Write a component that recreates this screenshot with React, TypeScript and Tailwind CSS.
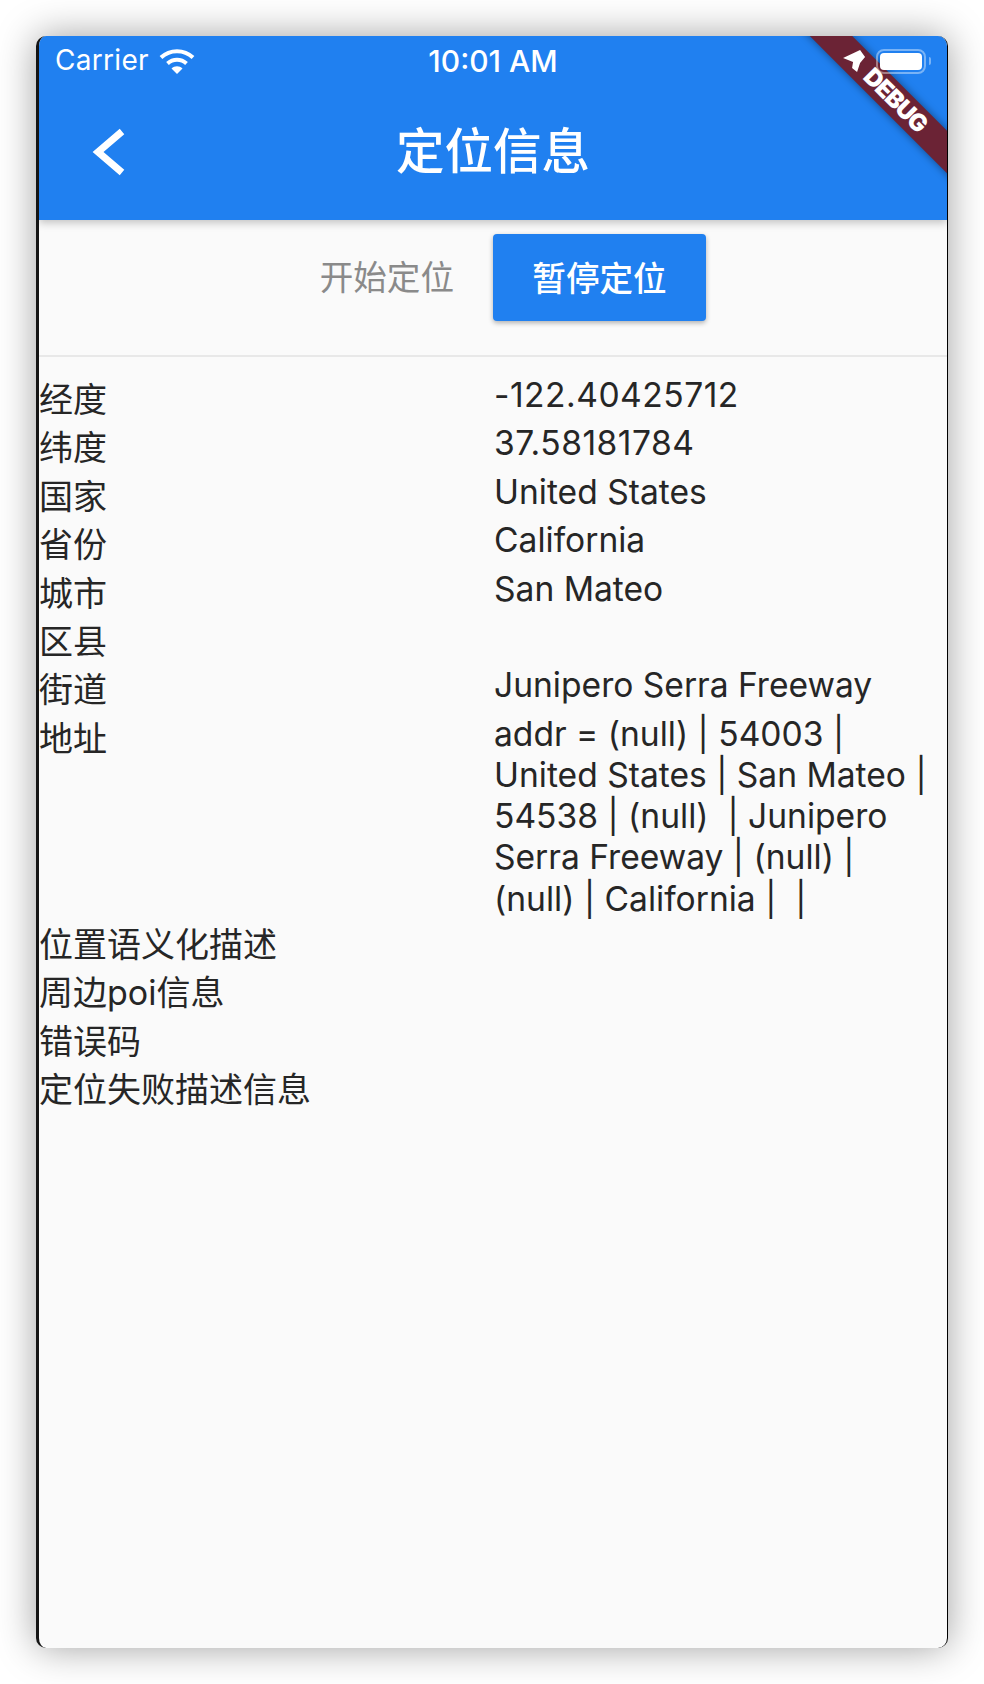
import React from 'react';

const rows = [
  { label: '经度', value: '-122.40425712', numeric: true },
  { label: '纬度', value: '37.58181784', numeric: true },
  { label: '国家', value: 'United States' },
  { label: '省份', value: 'California' },
  { label: '城市', value: 'San Mateo' },
  { label: '区县', value: '' },
  { label: '街道', value: 'Junipero Serra Freeway' },
  { label: '地址', value: 'addr = (null) | 54003 | United States | San Mateo | 54538 | (null)  | Junipero Serra Freeway | (null) | (null) | California |  | ' },
  { label: '位置语义化描述', value: '' },
  { label: '周边poi信息', value: '' },
  { label: '错误码', value: '' },
  { label: '定位失败描述信息', value: '' },
];

const font = "font-['Inter','Noto_Sans_CJK_SC',sans-serif]";

function Wifi() {
  return (
    <svg width="36" height="26" viewBox="0 0 36 26" fill="none" stroke="white" strokeWidth="4">
      <path d="M2 9.5C11 1 25 1 34 9.5" />
      <path d="M8.5 15.5C14 10.5 22 10.5 27.5 15.5" />
      <path d="M18 26l-5.5-5.5c3-3 8-3 11 0z" fill="white" stroke="none" />
    </svg>
  );
}

function Battery() {
  return (
    <div className="relative z-30 flex items-center gap-[3px]">
      <div className="w-[50px] h-[25px] rounded-[8px] border-2 border-white/40 p-[2px]">
        <div className="w-full h-full rounded-[4px] bg-white" />
      </div>
      <div className="w-[2px] h-[8px] rounded-r bg-white/40" />
    </div>
  );
}

export default function App() {
  return (
    <div className={`w-[984px] h-[1684px] bg-white pl-[36px] pt-[36px] ${font}`}>
      <div className="relative w-[912px] h-[1612px] rounded-[10px] overflow-hidden bg-[#fafafa] border-l-[3px] border-r border-l-[#141414] border-r-black shadow-[0_0_38px_rgba(0,0,0,0.38)] flex flex-col">
        {/* App bar */}
        <div className="h-[184px] bg-[#2080f0] shadow-[0_3px_8px_rgba(0,0,0,0.22)] shrink-0 text-white flex flex-col">
          <div className="h-[50px] px-[16px] flex items-center justify-between">
            <div className="flex items-center gap-[10px] w-[300px]">
              <span className="text-[28px] font-normal tracking-[0.3px] -mt-[2px]">Carrier</span>
              <Wifi />
            </div>
            <span className="text-[30px] font-medium">10:01 AM</span>
            <div className="w-[300px] flex justify-end">
              <Battery />
            </div>
          </div>
          <div className="h-[134px] pb-[2px] flex items-center">
            <div className="w-[140px] flex justify-center">
              <svg width="38" height="50" viewBox="0 0 38 50" fill="none" stroke="white" strokeWidth="7">
                <path d="M32 4.500L8 25l24 20.500" />
              </svg>
            </div>
            <div className="flex-1 pr-[140px] text-center text-[48.5px] font-medium leading-none">定位信息</div>
          </div>
        </div>

        {/* Buttons */}
        <div className="h-[137px] border-b-2 border-[#e8e8e8] shrink-0 flex pt-[14px]">
          <div className="w-[454px] flex justify-end pr-[39px] pt-[20px]">
            <span className="text-[33.6px] leading-[48px] text-[#8a8a8a]">开始定位</span>
          </div>
          <button className="w-[213px] h-[87px] pt-[4px] rounded-[4px] bg-[#2080f0] text-white text-[33.6px] font-medium shadow-[0_2px_5px_rgba(0,0,0,0.3)]">
            暂停定位
          </button>
        </div>

        {/* Details */}
        <div className="pt-[19px] text-[#262626]">
          {rows.map((row) => (
            <div key={row.label} className="grid grid-cols-[455px_1fr] items-start">
              <div className="text-[34px] leading-[48.4px]">{row.label}</div>
              <div className={`-mt-[2px] pb-[2px] text-[33.6px] leading-[41.2px] whitespace-pre-wrap pr-[12px] ${row.numeric ? 'tracking-[0.5px]' : ''}`}>
                {row.value}
              </div>
            </div>
          ))}
        </div>

        {/* Debug banner */}
        <div className="absolute top-[43px] right-[-72px] w-[260px] h-[30px] rotate-45 bg-[#6b2335] shadow-[0_0_8px_rgba(0,0,0,0.45)] z-20 flex items-center justify-center pl-[18px] text-white text-[24px] font-black tracking-[-1px]">
          <svg className="absolute left-[69px] top-[2px] -rotate-45" width="26" height="26" viewBox="-13 -13 26 26" fill="white">
            <path d="M-12-2L5-10l5 7-5 6-3 9-5-4 1-6z" />
          </svg>
          DEBUG
        </div>
      </div>
    </div>
  );
}
